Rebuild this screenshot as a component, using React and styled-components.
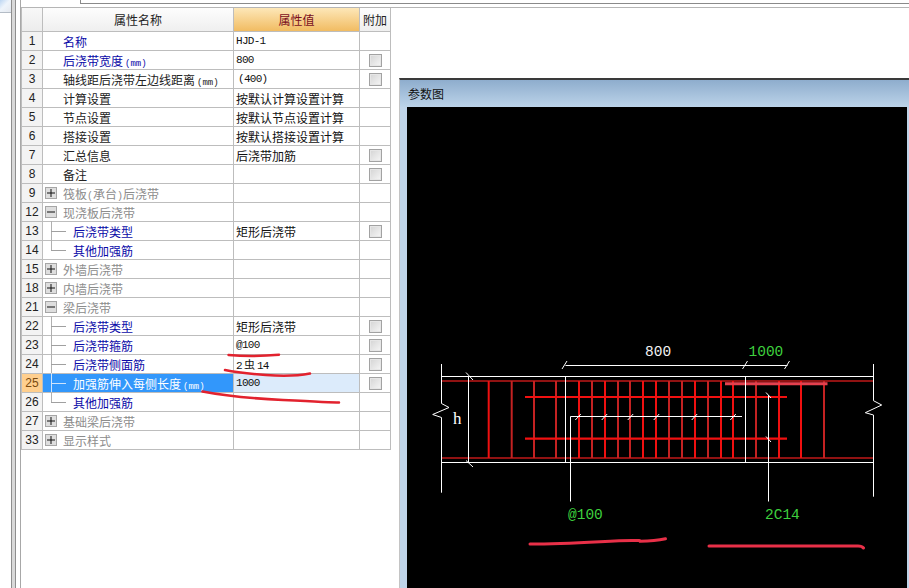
import React from 'react'
import styled, { createGlobalStyle } from 'styled-components'

const Global = createGlobalStyle`
html,body{margin:0;padding:0;background:#fff;}
`;

const CJK = `"Noto Sans CJK SC","Liberation Sans",sans-serif`;
const MONO = `"Liberation Mono","Noto Sans CJK SC",monospace`;

const Stage = styled.div`position:relative;width:909px;height:588px;overflow:hidden;background:#fff;display:flex;font-family:${CJK};font-size:12px;color:#222;`;
const LeftRail = styled.div`width:11px;flex:none;`;
const RailTab = styled.div`height:12px;background:linear-gradient(135deg,#bcd6f2 0%,#eef4fb 45%,#e4e8ee 100%);border-bottom:1px solid #b4bcc6;`;
const Splitter = styled.div`flex:none;width:3px;background:#d9d9d9;border-left:1px solid #8e8e8e;border-right:1px solid #8e8e8e;`;
const Workspace = styled.div`flex:1;min-width:0;display:flex;flex-direction:column;margin-left:4px;border-left:1px solid #a8a8a8;`;
const TopEdge = styled.div`height:7px;flex:none;border-bottom:1px solid #b5b5b5;padding-left:59px;`;
const TopTab = styled.div`height:3px;border-left:1px solid #8a8a8a;border-bottom:1px solid #8a8a8a;`;
const Content = styled.div`flex:1;display:flex;min-height:0;`;

const Table = styled.div`flex:none;box-sizing:border-box;width:370px;align-self:flex-start;border-left:1px solid #bdbdbd;display:grid;grid-template-columns:21px 191px 126px 31px;`;
const Cell = styled.div`box-sizing:border-box;height:${p => p.$h || 19}px;border-right:1px solid #bdbdbd;border-bottom:1px solid #bdbdbd;display:flex;align-items:center;white-space:nowrap;position:relative;background:${p => p.$bg || '#fff'};`;
const HeadCell = styled(Cell)`justify-content:center;font-size:12px;color:${p => p.$color || '#222'};background:${p => p.$bg || 'linear-gradient(#fdfdfd,#efefef)'};`;
const NumCell = styled(Cell)`justify-content:center;font-family:"Liberation Sans",sans-serif;font-size:12px;background:${p => p.$active ? '#ffcf8e' : '#f3f3f3'};color:${p => p.$active ? '#7a4a10' : '#222'};`;
const NameCell = styled(Cell)`padding-left:${p => p.$indent}px;color:${p => p.$color};background:${p => p.$active ? '#3297fb' : '#fff'};`;
const ValueCell = styled(Cell)`padding-left:2px;color:#111;background:${p => p.$active ? '#dcebfb' : '#fff'};`;
const Latin = styled.span`font-family:${MONO};font-size:11px;letter-spacing:-0.7px;margin-left:${p => p.$inset || 0}px;`;
const Rebar = styled.span`font-family:${CJK};font-size:11px;letter-spacing:0;margin:0 2px;`;
const Unit = styled.span`font-family:${MONO};font-size:9px;margin-left:2px;`;
const Paren = styled.span`font-family:${MONO};font-size:10px;`;
const ExtraCell = styled(Cell)`justify-content:center;`;
const Check = styled.span`width:13px;height:13px;box-sizing:border-box;border:1px solid #a2a2a2;background:linear-gradient(135deg,#d4d4d4,#f6f6f6);box-shadow:inset 0 0 0 1px #e6e6e6;`;
const Toggle = styled.span`position:absolute;left:2px;top:3px;width:12px;height:12px;box-sizing:border-box;border:1px solid #a6a6a6;background:#dedede;display:flex;align-items:center;justify-content:center;color:#111;`;
const TreeH = styled.span`position:absolute;left:8px;top:9px;width:15px;height:1px;background:${p => p.$active ? '#cfe4fb' : '#a0a0a0'};`;
const TreeV = styled.span`position:absolute;left:8px;top:-1px;width:1px;height:${p => p.$last ? 11 : 19}px;background:${p => p.$active ? '#cfe4fb' : '#b0b0b0'};`;

const ParamWindow = styled.div`flex:none;width:510px;margin:70px 0 0 8px;box-sizing:border-box;border-top:2px solid #3a3a3a;border-left:1px solid #c4c4c4;display:flex;flex-direction:column;background:#bfd4e9;padding:0 2px 0 7px;`;
const TitleBar = styled.div`height:27px;flex:none;margin:0 -2px 0 -7px;padding-left:8px;display:flex;align-items:center;font-size:12px;color:#111;background:linear-gradient(#8eadcd,#bcd3e9);`;
const Canvas = styled.div`flex:1;background:#000;min-height:0;`;
const DrawSvg = styled.svg`display:block;width:500px;height:481px;`;
const Label = styled.text`font-family:${p => p.$serif ? '"Liberation Serif",serif' : '"Liberation Mono",monospace'};font-size:${p => p.$serif ? 17 : 14.5}px;fill:${p => p.$fill || '#3ed03e'};`;
const Overlay = styled.svg`position:absolute;left:0;top:0;width:909px;height:588px;pointer-events:none;`;

const rows = [
  { no: 1, name: '名称', blue: true, value: <Latin>HJD-1</Latin> },
  { no: 2, name: '后浇带宽度', unit: true, blue: true, value: <Latin>800</Latin>, check: true },
  { no: 3, name: '轴线距后浇带左边线距离', unit: true, value: <Latin $inset={2}>(400)</Latin>, check: true },
  { no: 4, name: '计算设置', value: '按默认计算设置计算' },
  { no: 5, name: '节点设置', value: '按默认节点设置计算' },
  { no: 6, name: '搭接设置', value: '按默认搭接设置计算' },
  { no: 7, name: '汇总信息', value: '后浇带加筋', check: true },
  { no: 8, name: '备注', check: true },
  { no: 9, name: <>筏板<Paren>(</Paren>承台<Paren>)</Paren>后浇带</>, group: '+' },
  { no: 12, name: '现浇板后浇带', group: '-' },
  { no: 13, name: '后浇带类型', child: true, value: '矩形后浇带', check: true },
  { no: 14, name: '其他加强筋', child: true, last: true },
  { no: 15, name: '外墙后浇带', group: '+' },
  { no: 18, name: '内墙后浇带', group: '+' },
  { no: 21, name: '梁后浇带', group: '-' },
  { no: 22, name: '后浇带类型', child: true, value: '矩形后浇带', check: true },
  { no: 23, name: '后浇带箍筋', child: true, value: <Latin>@100</Latin>, check: true },
  { no: 24, name: '后浇带侧面筋', child: true, value: <Latin>2<Rebar>虫</Rebar>14</Latin>, check: true },
  { no: 25, name: '加强筋伸入每侧长度', unit: true, child: true, active: true, value: <Latin>1000</Latin>, check: true },
  { no: 26, name: '其他加强筋', child: true, last: true },
  { no: 27, name: '基础梁后浇带', group: '+' },
  { no: 33, name: '显示样式', group: '+' },
];

const nameColor = r => {
  if (r.active) return '#fff';
  if (r.group) return '#8c8c8c';
  if (r.blue || r.child) return '#0a0aa8';
  return '#222';
};

const ToggleIcon = ({ kind }) => (
  <Toggle>
    <svg width="8" height="8" viewBox="0 0 8 8">
      <path d={kind === '+' ? 'M0 4H8M4 0V8' : 'M0 4H8'} stroke="#111" strokeWidth="1" fill="none" />
    </svg>
  </Toggle>
);

const stirrups = [
  [488.7, 1], [511.7, 0], [534, 0], [556, 0], [579, 1], [592, 0], [605, 1], [618, 0], [630, 0], [643, 1], [656, 1],
  [669, 0], [682, 0], [695, 1], [708, 0], [721, 1], [733, 1], [756, 0], [779, 1], [801, 1], [824, 0],
];
const leaderTicks = [578.3, 604.7, 630.7, 656.7, 694.7, 733.3];
const W = '#fff';

const Diagram = () => (
  <DrawSvg viewBox="407 107 500 481">
    <g fill="none" strokeWidth="1">
      <path d="M441 381H873M441 458H873" stroke="#c01818" strokeWidth="1.5" />
      {stirrups.map(([x, hot]) => (
        <path key={x} d={`M${x} 381V458`} stroke={hot ? '#f01010' : '#c42222'} strokeWidth="2" />
      ))}
      <path d="M525 397H787M525 438.7H787" stroke="#f21010" strokeWidth="2.2" />
      <path d="M725 383.7H827.5" stroke="#e5404e" strokeWidth="3" />
      <g stroke={W}>
        <path d="M441.5 364V403.5L449 407.5L432.7 414.5L441.5 417.5V492.7" />
        <path d="M873.5 364V400.7L881.7 405L865.3 412.7L873.5 415V496.7" />
        <path d="M441.5 376.5H873.5M441.5 462.5H873.5" />
        <path d="M468.5 376.5V462.5M466 372.5L473 380M466 460.5L473 467" />
        <path d="M565.5 376.5V462.5M745.5 376.5V462.5" />
        <path d="M565.5 365.5H787.5M562 369L567 361M742.5 369L747.5 361M784.5 369L789.5 361" />
        <path d="M570.5 501.5V416.5H742" />
        {leaderTicks.map(x => <path key={x} d={`M${x - 3} 420L${x + 2.5} 414`} />)}
        <path d="M768.5 395V501.5M766 392.5L771 398M766 436.5L771 442" />
      </g>
    </g>
    <Label x="645" y="356" $fill="#f2f2f2">800</Label>
    <Label x="748.5" y="356">1000</Label>
    <Label x="453" y="424" $fill="#ffffff" $serif>h</Label>
    <Label x="568" y="519">@100</Label>
    <Label x="765" y="519">2C14</Label>
  </DrawSvg>
);

export default function App() {
  return (
    <Stage>
      <Global />
      <LeftRail><RailTab /></LeftRail>
      <Splitter />
      <Workspace>
        <TopEdge><TopTab /></TopEdge>
        <Content>
          <Table>
            <HeadCell $h={24} $bg="linear-gradient(#f8f8f8,#ececec)" />
            <HeadCell $h={24}>属性名称</HeadCell>
            <HeadCell $h={24} $color="#7a0e1e" $bg="linear-gradient(#fde7b8,#f1bc62)">属性值</HeadCell>
            <HeadCell $h={24}>附加</HeadCell>
            {rows.map(r => (
              <React.Fragment key={r.no}>
                <NumCell $active={r.active}>{r.no}</NumCell>
                <NameCell $indent={r.child ? 30 : 20} $color={nameColor(r)} $active={r.active}>
                  {r.group && <ToggleIcon kind={r.group} />}
                  {r.child && <TreeV $last={r.last} $active={r.active} />}
                  {r.child && <TreeH $active={r.active} />}
                  <span>{r.name}{r.unit && <Unit>(mm)</Unit>}</span>
                </NameCell>
                <ValueCell $active={r.active}>{r.value}</ValueCell>
                <ExtraCell>{r.check && <Check />}</ExtraCell>
              </React.Fragment>
            ))}
          </Table>
          <ParamWindow>
            <TitleBar>参数图</TitleBar>
            <Canvas><Diagram /></Canvas>
          </ParamWindow>
        </Content>
      </Workspace>
      <Overlay viewBox="0 0 909 588">
        <g fill="none" stroke="#e2222e" strokeWidth="2.5" strokeLinecap="round" strokeLinejoin="round">
          <path d="M228.5 355Q253 357 279 354.7" />
          <path d="M225 370Q240 373 266 375T310 373.5" />
          <path d="M202.5 391.5Q233 397.5 283 400T339 402.5" />
          <path d="M530 544Q556 544 600 541.7T640 541.3Q655 541 665.5 538.7" strokeWidth="3" stroke="#e83048" />
          <path d="M709 546H858Q862 546 863.5 548" strokeWidth="3" stroke="#e83048" />
        </g>
      </Overlay>
    </Stage>
  );
}
